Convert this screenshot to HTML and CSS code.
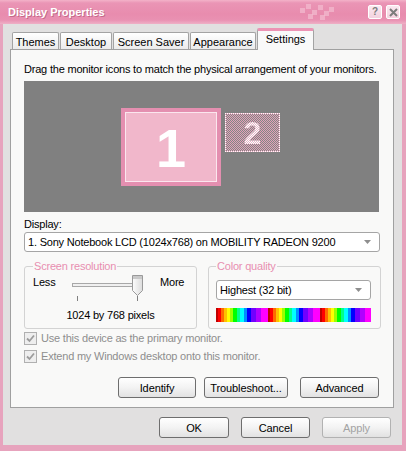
FILE: index.html
```html
<!DOCTYPE html>
<html>
<head>
<meta charset="utf-8">
<link rel="stylesheet" href="styles.css">
</head>
<body>
<div class="window">
  <div class="titlebar">
    <span class="title">Display Properties</span>
    <div class="deco">
      <i style="left:2px;top:8px"></i><i style="left:8px;top:4px"></i><i style="left:14px;top:10px"></i>
      <i style="left:20px;top:5px"></i><i style="left:26px;top:11px"></i><i style="left:10px;top:14px"></i>
      <i style="left:22px;top:15px"></i><i style="left:31px;top:7px"></i>
    </div>
    <div class="tbtns">
      <span class="tbtn">?</span>
      <span class="tbtn">
        <svg width="9" height="9" viewBox="0 0 9 9"><path d="M1 1L8 8M8 1L1 8" stroke="#7c7c7c" stroke-width="2"/></svg>
      </span>
    </div>
  </div>
  <div class="frame">
    <div class="tabs">
      <div class="tab w1">Themes</div>
      <div class="tab w2">Desktop</div>
      <div class="tab w3">Screen Saver</div>
      <div class="tab w4">Appearance</div>
      <div class="tab sel w5">Settings</div>
    </div>
    <div class="panel">
      <div class="intro">Drag the monitor icons to match the physical arrangement of your monitors.</div>
      <div class="canvas">
        <div class="mon1"><span>1</span></div>
        <div class="mon2"><span>2</span></div>
      </div>
      <div class="label">Display:</div>
      <div class="combo wide">
        <span>1. Sony Notebook LCD (1024x768) on MOBILITY RADEON 9200</span>
        <svg class="arr" width="7" height="4" viewBox="0 0 7 4"><path d="M0 0H7L3.5 4Z" fill="#8e8e8e"/></svg>
      </div>
      <div class="groups">
        <fieldset class="grp res">
          <legend>Screen resolution</legend>
          <div class="srow">
            <span class="less">Less</span>
            <div class="slider">
              <div class="track"></div>
              <svg class="thumb" width="11" height="21" viewBox="0 0 11 21">
                <defs><linearGradient id="tg" x1="0" x2="1"><stop offset="0" stop-color="#fdfdfd"/><stop offset="1" stop-color="#dcdcdc"/></linearGradient></defs>
                <path d="M0.5 0.5H10.5V15.5L5.5 20.5L0.5 15.5Z" fill="url(#tg)" stroke="#9a9a9a"/>
                <rect x="1" y="1" width="9" height="3" fill="#c9c9c9"/>
              </svg>
              <div class="ticks"><i></i><i></i></div>
            </div>
            <span class="more">More</span>
          </div>
          <div class="pix">1024 by 768 pixels</div>
        </fieldset>
        <fieldset class="grp col">
          <legend>Color quality</legend>
          <div class="combo small">
            <span>Highest (32 bit)</span>
            <svg class="arr" width="7" height="4" viewBox="0 0 7 4"><path d="M0 0H7L3.5 4Z" fill="#8e8e8e"/></svg>
          </div>
          <div class="rainbow"></div>
        </fieldset>
      </div>
      <div class="check">
        <span class="box"><svg width="9" height="9" viewBox="0 0 9 9"><path d="M1 4.5L3.5 7L8 1.5" fill="none" stroke="#9c9c9c" stroke-width="1.8"/></svg></span>
        <span>Use this device as the primary monitor.</span>
      </div>
      <div class="check">
        <span class="box"><svg width="9" height="9" viewBox="0 0 9 9"><path d="M1 4.5L3.5 7L8 1.5" fill="none" stroke="#9c9c9c" stroke-width="1.8"/></svg></span>
        <span>Extend my Windows desktop onto this monitor.</span>
      </div>
      <div class="btnrow">
        <button class="btn b-id">Identify</button>
        <button class="btn b-tr">Troubleshoot...</button>
        <button class="btn b-ad">Advanced</button>
      </div>
    </div>
    <div class="bottom">
      <button class="btn b-ok">OK</button>
      <button class="btn b-ca">Cancel</button>
      <button class="btn b-ap" disabled>Apply</button>
    </div>
  </div>
</div>
</body>
</html>
```
FILE: styles.css
```css
html, body { margin: 0; padding: 0; }
body {
  width: 406px; height: 451px; overflow: hidden;
  font-family: "Liberation Sans", Arial, sans-serif;
  font-size: 11px; color: #000;
  letter-spacing: -0.2px;
}
.window {
  width: 406px; height: 451px;
  background: #e7a3bd;
  display: flex; flex-direction: column;
  box-sizing: border-box;
}
.titlebar {
  height: 24px; flex: none;
  display: flex; align-items: center;
  padding: 0 6px 0 8px;
  background: linear-gradient(#f3b2c9 0, #ea95b5 3px, #e88cae 14px, #e991b2 20px, #efb0c6 24px);
  position: relative;
}
.title {
  color: #fff; font-weight: bold; font-size: 11px;
  text-shadow: 1px 1px 0 rgba(150,60,90,0.45);
  letter-spacing: 0;
}
.deco { position: absolute; left: 298px; top: 0; width: 40px; height: 24px; }
.deco i { position: absolute; width: 5px; height: 5px; background: #f2bcd0; opacity: 0.7; }
.tbtns { margin-left: auto; display: flex; gap: 4px; }
.tbtn {
  width: 14px; height: 14px; box-sizing: border-box;
  border: 1px solid #fff; border-radius: 2px;
  background: linear-gradient(#fbe9f0, #f3d2df);
  display: flex; align-items: center; justify-content: center;
  color: #7c7c7c; font-weight: bold; font-size: 10px; line-height: 1;
  letter-spacing: 0;
}
.frame {
  flex: 1;
  margin: 0 4px 6px 3px;
  background: #e1e0e0;
  padding: 4px 8px 0 7px;
  display: flex; flex-direction: column;
}
.tabs { display: flex; align-items: flex-end; height: 21px; padding-left: 2px; gap: 1px; position: relative; z-index: 1; }
.tab {
  height: 17px; box-sizing: border-box;
  border: 1px solid #a3a3a3; border-bottom: none;
  border-radius: 2px 2px 0 0;
  background: linear-gradient(#ffffff, #ebebeb);
  display: flex; align-items: center; justify-content: center;
  padding-top: 1px;
  letter-spacing: 0;
}
.tab.sel {
  height: 22px; margin-bottom: -1px;
  background: #f9f9f9;
  border-top: 3px solid #ec93b4;
  align-items: flex-start; padding-top: 2px;
}
.w1 { width: 47px; } .w2 { width: 52px; } .w3 { width: 76px; } .w4 { width: 66px; } .w5 { width: 57px; }
.panel {
  height: 359px; box-sizing: border-box;
  border: 1px solid #a0a0a0; background: #f9f9f8;
  padding: 13px 14px 0 13px;
  display: flex; flex-direction: column;
}
.intro { line-height: 13px; white-space: nowrap; }
.canvas {
  margin-top: 5px; width: 355px; height: 131px; flex: none;
  background: #808080; position: relative;
}
.mon1 {
  position: absolute; left: 97px; top: 27px;
  width: 100px; height: 78px; box-sizing: border-box;
  background: #f1b7cb;
  border: 4px solid #e48fb0;
  box-shadow: inset 0 0 0 1px #fbe6ee;
  display: flex; align-items: center; justify-content: center;
}
.mon1 span {
  color: #fff; font-weight: bold; font-size: 54px; line-height: 1;
  margin-top: 1px; letter-spacing: 0;
}
.mon2 {
  position: absolute; left: 201px; top: 32px;
  width: 55px; height: 39px; box-sizing: border-box;
  background: repeating-conic-gradient(#e2a2b9 0 25%, #858585 0 50%) 0 0 / 2px 2px;
  border: 1px dotted #fff;
  display: flex; align-items: center; justify-content: center;
}
.mon2 span {
  font-weight: bold; font-size: 32px; line-height: 1; letter-spacing: 0;
  background: repeating-conic-gradient(#ffffff 0 25%, rgba(255,255,255,0.25) 0 50%) 0 0 / 2px 2px;
  -webkit-background-clip: text; background-clip: text;
  color: transparent;
}
.label { margin-top: 6px; line-height: 13px; }
.combo {
  box-sizing: border-box; height: 20px;
  border: 1px solid #a5a5a5; border-radius: 3px;
  background: #fff;
  display: flex; align-items: center;
  padding: 0 8px 0 3px;
}
.combo .arr { margin-left: auto; }
.wide { margin-top: 1px; width: 356px; }
.groups { display: grid; grid-template-columns: 173px 173px; column-gap: 11px; margin-top: 8px; }
.grp {
  margin: 0; box-sizing: border-box; height: 69px;
  border: 1px solid #d3d3d3; border-radius: 3px;
  padding: 3px 0 0 8px; min-width: 0;
}
.grp legend { color: #e88fb0; padding: 0 1px; margin-left: 0; line-height: 13px; }
.srow { display: flex; align-items: flex-start; height: 26px; }
.less { width: 39px; }
.slider { position: relative; width: 71px; height: 26px; }
.track {
  position: absolute; left: 0; top: 7px; width: 71px; height: 4px; box-sizing: border-box;
  border: 1px solid #a8a8a8; background: #f0f0f0;
}
.thumb { position: absolute; left: 60px; top: -1px; }
.ticks { position: absolute; left: 0; top: 20px; width: 71px; height: 5px; }
.ticks i { position: absolute; top: 0; width: 1px; height: 5px; background: #808080; }
.ticks i:first-child { left: 5px; }
.ticks i:last-child { left: 65px; }
.more { margin-left: 17px; }
.pix { text-align: center; margin-left: -8px; line-height: 13px; margin-top: 7px; }
.col { padding-left: 7px; }
.small { width: 155px; margin-top: 4px; }
.rainbow {
  margin-top: 8px; width: 155px; height: 14px;
  background: repeating-linear-gradient(90deg,
    #c00000 0 2px, #ff0000 2px 5px, #ff6a00 5px 8px, #ffc000 8px 11px, #ffff00 11px 14px,
    #9cff00 14px 17px, #00ff00 17px 21px, #00ff8a 21px 24px, #00ffff 24px 28px,
    #0090ff 28px 31px, #0000ff 31px 35px, #7000ff 35px 40px, #b000ff 40px 45px, #ff00ff 45px 52px);
}
.check { display: flex; align-items: center; height: 18px; color: #8e8e8e; }
.check:first-of-type { margin-top: 5px; }
.box {
  width: 13px; height: 13px; box-sizing: border-box;
  border: 1px solid #b0b0b0; background: #eeeeee;
  display: flex; align-items: center; justify-content: center;
  margin-right: 4px;
}
.btnrow { display: flex; justify-content: flex-end; margin-top: 12px; }
.btn {
  font-family: "Liberation Sans", Arial, sans-serif; font-size: 11px; color: #000;
  letter-spacing: -0.1px;
  height: 21px; box-sizing: border-box; padding: 0;
  border: 1px solid #6e6e6e; border-radius: 3px;
  background: linear-gradient(#ffffff, #f3f3f3 50%, #e2e2e2);
}
.b-id { width: 78px; }
.b-tr { width: 84px; margin-left: 8px; }
.b-ad { width: 79px; margin-left: 12px; }
.bottom { display: flex; justify-content: flex-end; margin-top: 9px; padding-right: 3px; }
.b-ok { width: 70px; }
.b-ca { width: 69px; margin-left: 12px; }
.b-ap { width: 69px; margin-left: 12px; color: #a3a3a3; border-color: #b2b2b2; }
```
